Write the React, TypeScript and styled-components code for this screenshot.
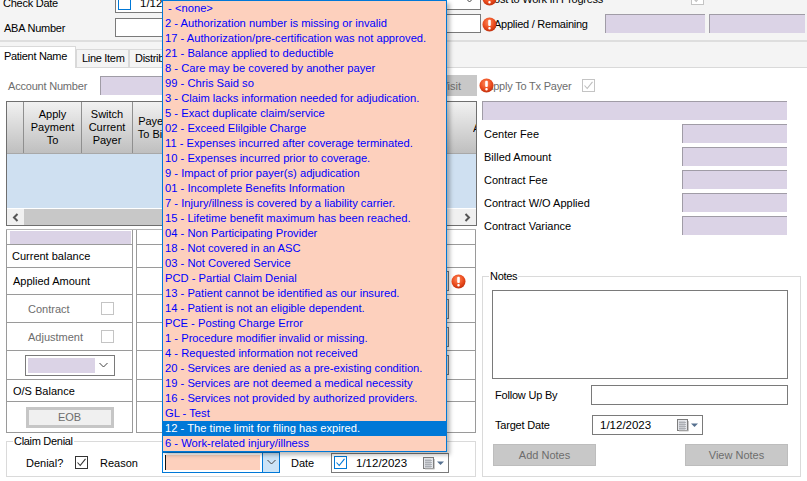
import React from "react";
import styled, { createGlobalStyle } from "styled-components";

const Global = createGlobalStyle`
  html, body { margin: 0; padding: 0; background: #f4f4f4; }
  * { box-sizing: border-box; }
`;

const LILAC = "#dbd3e6";
const PEACH = "#fdd0bd";
const LINE = "#7a7a7a";

const Page = styled.div`
  position: relative;
  width: 807px;
  height: 481px;
  overflow: hidden;
  background: #f4f4f4;
  font-family: "Liberation Sans", Arial, sans-serif;
  font-size: 11px;
  color: #000;
`;

/* ---------- top form ---------- */
const TopBar = styled.div`
  height: 42px;
  border-bottom: 2px solid #dedede;
  display: flex;
  overflow: hidden;
`;
const TopColumn = styled.div<{ $w: number; $lift: number }>`
  width: ${(p) => p.$w}px;
  margin-top: ${(p) => -p.$lift}px;
  flex: none;
  display: flex;
  flex-direction: column;
`;
const TopRow = styled.div<{ $h: number }>`
  height: ${(p) => p.$h}px;
  flex: none;
  display: flex;
  align-items: center;
`;
const TopLabel = styled.span<{ $w: number; $pad?: number }>`
  width: ${(p) => p.$w}px;
  padding-left: ${(p) => p.$pad ?? 0}px;
  flex: none;
  white-space: nowrap;
  letter-spacing: -0.25px;
`;
const TextBox = styled.div<{ $w: number; $h?: number }>`
  width: ${(p) => p.$w}px;
  height: ${(p) => p.$h ?? 20}px;
  border: 1px solid ${LINE};
  background: #fff;
  flex: none;
`;
const LilacBox = styled.div<{ $w: number; $h?: number; $gap?: number }>`
  width: ${(p) => p.$w}px;
  height: ${(p) => p.$h ?? 19}px;
  margin-left: ${(p) => p.$gap ?? 0}px;
  background: ${LILAC};
  border-top: 1px solid #a09ca6;
  border-left: 1px solid #a09ca6;
  flex: none;
`;
const DateField = styled.div<{ $w: number; $h?: number; $pad?: number; $indent?: number }>`
  width: ${(p) => p.$w}px;
  height: ${(p) => p.$h ?? 20}px;
  margin-left: ${(p) => p.$indent ?? 0}px;
  border: 1px solid ${LINE};
  background: #fff;
  flex: none;
  display: flex;
  align-items: center;
  padding: 0 1px 0 ${(p) => p.$pad ?? 2}px;
  gap: 9px;
  font-size: 11.5px;
`;
const DateText = styled.span`
  width: 56px;
  flex: none;
  white-space: nowrap;
`;
const BlueCheck = styled.span`
  width: 13px;
  height: 13px;
  border: 1px solid #0078d7;
  background: #fff;
  flex: none;
  display: flex;
`;
const GreyCheck = styled.span<{ $disabled?: boolean }>`
  width: 13px;
  height: 13px;
  border: 1px solid ${(p) => (p.$disabled ? "#c4c4c4" : "#333")};
  background: #fff;
  flex: none;
  display: flex;
`;
const SmallCombo = styled.div<{ $w: number; $h?: number }>`
  width: ${(p) => p.$w}px;
  height: ${(p) => p.$h ?? 20}px;
  border: 1px solid ${LINE};
  background: #fff;
  flex: none;
  display: flex;
  align-items: center;
  justify-content: space-between;
  padding: 2px 5px 2px 2px;
`;

/* ---------- tabs ---------- */
const TabStrip = styled.div`
  height: 26px;
  display: flex;
  align-items: flex-end;
  border-bottom: 1px solid #d9d9d9;
`;
const Tab = styled.div<{ $active?: boolean; $w: number }>`
  width: ${(p) => p.$w}px;
  height: ${(p) => (p.$active ? 22 : 18)}px;
  background: ${(p) => (p.$active ? "#fff" : "#f4f4f4")};
  border: 1px solid #d9d9d9;
  border-bottom: none;
  border-left: ${(p) => (p.$active ? "none" : "1px solid #d9d9d9")};
  margin-bottom: ${(p) => (p.$active ? -1 : 0)}px;
  padding-left: ${(p) => (p.$active ? 4 : 5)}px;
  line-height: ${(p) => (p.$active ? 19 : 17)}px;
  letter-spacing: -0.3px;
  white-space: nowrap;
  overflow: hidden;
  position: relative;
`;
const TabPanel = styled.div`
  height: 413px;
  background: #fff;
  padding: 7px 0 0 6px;
`;

const AccountRow = styled.div`
  height: 21px;
  display: flex;
  align-items: center;
`;
const MutedLabel = styled.span<{ $w?: number; $pad?: number }>`
  color: #6d6d6d;
  width: ${(p) => (p.$w ? `${p.$w}px` : "auto")};
  padding-left: ${(p) => p.$pad ?? 0}px;
  flex: none;
  white-space: nowrap;
  letter-spacing: -0.2px;
`;
const VisitButton = styled.div`
  width: 106px;
  height: 21px;
  margin-left: 4px;
  background: #c8c8c8;
  color: #6d6d6d;
  display: flex;
  align-items: center;
  justify-content: flex-end;
  padding-right: 16px;
  flex: none;
`;

const Columns = styled.div`
  display: flex;
  margin-top: 5px;
`;
const LeftColumn = styled.div`
  width: 471px;
  flex: none;
`;
const RightColumn = styled.div`
  width: 305px;
  margin-left: 5px;
  flex: none;
`;

/* ---------- data grid ---------- */
const DataGrid = styled.div`
  height: 125px;
  width: 471px;
  border: 1px solid #6f6f6f;
  display: flex;
  flex-direction: column;
`;
const GridHead = styled.div`
  height: 52px;
  display: flex;
  flex: none;
  border-bottom: 1px solid #a8a8a8;
  background: linear-gradient(#f1f1f1, #bfbfbf);
`;
const HeadCell = styled.div<{ $w: number }>`
  width: ${(p) => p.$w}px;
  flex: none;
  border-right: 1px solid #8f8f8f;
  text-align: center;
  display: flex;
  align-items: center;
  justify-content: center;
  line-height: 13px;
  white-space: pre-line;
  overflow: hidden;
`;
const HeadTail = styled.div`
  flex: 1;
  display: flex;
  align-items: center;
  justify-content: flex-end;
`;
const HeadClip = styled.span`
  width: 3px;
  overflow: hidden;
  white-space: nowrap;
`;
const GridBody = styled.div`
  flex: 1;
  background: #cfe0f1;
`;
const ScrollBar = styled.div`
  height: 17px;
  flex: none;
  display: flex;
  align-items: center;
  justify-content: space-between;
  background: #f0f0f0;
  border-top: 1px solid #fff;
`;
const ScrollArrow = styled.span`
  width: 17px;
  height: 16px;
  flex: none;
  display: flex;
  align-items: center;
  justify-content: center;
  background: #f0f0f0;
`;
const ScrollThumb = styled.span`
  flex: 1;
  height: 16px;
  background: #c8c8c8;
  margin-right: 25px;
`;

/* ---------- ledger under the grid ---------- */
const Ledger = styled.div`
  margin-top: 3px;
  width: 470px;
  display: grid;
  grid-template-columns: 127px 340px;
  column-gap: 3px;
  grid-template-rows: 15px 23px 27px 28px 28px 29px 22px 31px;
  border-top: 1px solid #b5b5b5;
`;
const LeftCell = styled.div<{ $pad?: number; $muted?: boolean; $center?: boolean }>`
  border: 1px solid #9a9a9a;
  border-top: none;
  display: flex;
  align-items: center;
  justify-content: ${(p) => (p.$center ? "center" : "flex-start")};
  padding-left: ${(p) => p.$pad ?? 0}px;
  color: ${(p) => (p.$muted ? "#6d6d6d" : "#000")};
  white-space: nowrap;
`;
const RightCell = styled.div`
  border: 1px solid #9a9a9a;
  border-top: none;
  display: flex;
  align-items: center;
  justify-content: flex-end;
  padding-right: 26px;
`;
const CellField = styled.div`
  width: 100px;
  height: 20px;
  border: 1px solid ${LINE};
  background: #efefef;
`;
const LedgerLilac = styled.div`
  width: 121px;
  height: 13px;
  margin: 1px 0 0 3px;
  background: ${LILAC};
`;
const PushRight = styled.span<{ $w: number }>`
  width: ${(p) => p.$w}px;
  flex: none;
`;
const LilacFill = styled.span`
  width: 67px;
  height: 15px;
  background: ${LILAC};
`;
const EobButton = styled.div`
  width: 88px;
  height: 21px;
  border: 3px solid #c6c6c6;
  background: #f0f0f0;
  color: #6d6d6d;
  display: flex;
  align-items: center;
  justify-content: center;
`;

/* ---------- group boxes ---------- */
const GroupBox = styled.fieldset<{ $w: number; $h: number }>`
  width: ${(p) => p.$w}px;
  height: ${(p) => p.$h}px;
  margin: 0;
  padding: 0;
  border: 1px solid #dadada;
  min-inline-size: 0;
`;
const GroupTitle = styled.legend`
  margin-left: 6px;
  padding: 0 1px;
  line-height: 13px;
  font-size: 11px;
  letter-spacing: -0.3px;
`;
const NotesTitle = styled(GroupTitle)`
  margin-left: -3px;
`;
const ClaimGroup = styled(GroupBox)`
  margin-top: 2px;
`;
const ClaimRow = styled.div`
  display: flex;
  align-items: center;
  height: 21px;
  margin-top: 4px;
`;
const ClaimLabel = styled.span<{ $left: number; $w: number }>`
  margin-left: ${(p) => p.$left}px;
  width: ${(p) => p.$w}px;
  flex: none;
  white-space: nowrap;
`;
const FocusCombo = styled.div`
  width: 118px;
  height: 21px;
  border: 1px solid #0078d7;
  background: #fff;
  display: flex;
  flex: none;
`;
const PeachEdit = styled.span`
  width: 95px;
  margin: 2px 0 2px 2px;
  background: ${PEACH};
  border-left: 1px solid #111;
`;
const FocusDrop = styled.span`
  width: 17px;
  margin-left: auto;
  background: #cce4f7;
  border-left: 1px solid #0078d7;
  display: flex;
  align-items: center;
  justify-content: center;
`;

/* ---------- right column ---------- */
const TotalBar = styled.div`
  height: 19px;
  background: ${LILAC};
  border-top: 1px solid #a09ca6;
  border-left: 1px solid #a09ca6;
`;
const FeeRows = styled.div`
  display: flex;
  flex-direction: column;
  gap: 4px;
  margin-top: 4px;
`;
const FeeRow = styled.div`
  height: 19px;
  display: flex;
  align-items: center;
  justify-content: space-between;
  padding-left: 2px;
`;
const NotesGroup = styled(GroupBox)`
  margin-top: 35px;
  padding: 7px 12px 0 9px;
`;
const NotesArea = styled.div`
  height: 89px;
  width: 296px;
  border: 1px solid ${LINE};
  background: #fff;
`;
const NotesRow = styled.div<{ $top: number }>`
  display: flex;
  align-items: center;
  margin-top: ${(p) => p.$top}px;
`;
const NotesLabel = styled.span`
  width: 99px;
  padding-left: 3px;
  flex: none;
  letter-spacing: -0.2px;
`;
const ActionRow = styled.div`
  display: flex;
  justify-content: space-between;
  width: 295px;
  margin: 9px 0 0 1px;
`;
const GreyButton = styled.div`
  width: 103px;
  height: 22px;
  background: #c8c8c8;
  border: 1px solid #bdbdbd;
  color: #6d6d6d;
  display: flex;
  align-items: center;
  justify-content: center;
`;

/* ---------- overlays ---------- */
const ErrorDot = styled.svg<{ $x: number; $y: number }>`
  position: absolute;
  left: ${(p) => p.$x}px;
  top: ${(p) => p.$y}px;
  width: 15px;
  height: 15px;
`;
const DropList = styled.ul`
  position: absolute;
  left: 162px;
  top: 0;
  width: 285px;
  height: 452px;
  margin: 0;
  padding: 0;
  list-style: none;
  background: ${PEACH};
  border: 1px solid #0078d7;
  box-shadow: 3px 3px 4px rgba(0, 0, 0, 0.28);
  font-size: 11.2px;
`;
const DropItem = styled.li<{ $selected?: boolean }>`
  height: 15px;
  line-height: 15px;
  padding-left: 2px;
  white-space: pre;
  color: ${(p) => (p.$selected ? "#fff" : "#0000ff")};
  background: ${(p) => (p.$selected ? "#0078d7" : "transparent")};
`;
const CalendarSvg = styled.svg`
  margin-left: auto;
  flex: none;
`;

const Chevron = () => (
  <svg width="11" height="7" viewBox="0 0 11 7">
    <path d="M1.5 1 5.5 5 9.5 1" fill="none" stroke="#444" strokeWidth="1" />
  </svg>
);
const Tick = ({ color }: { color: string }) => (
  <svg width="11" height="11" viewBox="0 0 11 11">
    <path d="M1.5 5.5 4.2 8.5 9.5 1.8" fill="none" stroke={color} strokeWidth="1.1" />
  </svg>
);
const Arrow = ({ dir }: { dir: "l" | "r" }) => (
  <svg width="7" height="9" viewBox="0 0 7 9">
    <path d={dir === "l" ? "M5.5 1 2 4.5 5.5 8" : "M1.5 1 5 4.5 1.5 8"} fill="none" stroke="#555" strokeWidth="2" />
  </svg>
);
const CalendarIcon = () => (
  <CalendarSvg width="25" height="14" viewBox="0 0 25 14">
    <rect x="1.5" y="1.5" width="10" height="11" fill="#e4e6ea" stroke="#7d7d7d" />
    <path d="M3 4.5h7M3 6.5h7M3 8.5h7M3 10.5h7M4 3v9M6 3v9M8 3v9" stroke="#a3a7ad" strokeWidth="0.8" />
    <path d="M12.5 3v10H3" fill="none" stroke="#c8c8c8" />
    <path d="M15 5.5h7l-3.5 3.5z" fill="#56708f" />
  </CalendarSvg>
);
const ErrorIcon = ({ x, y }: { x: number; y: number }) => {
  const id = `err${x}${y}`;
  return (
    <ErrorDot $x={x} $y={y} viewBox="0 0 15 15">
      <defs>
        <radialGradient id={id} cx="45%" cy="35%" r="70%">
          <stop offset="0" stopColor="#ff8a5c" />
          <stop offset="0.6" stopColor="#ea4a1c" />
          <stop offset="1" stopColor="#b92c0c" />
        </radialGradient>
      </defs>
      <circle cx="7.5" cy="7.5" r="7" fill={`url(#${id})`} />
      <rect x="6.2" y="2.8" width="2.6" height="6.2" rx="1" fill="#fff" />
      <rect x="6.3" y="10" width="2.4" height="2.4" rx="1" fill="#fff" />
    </ErrorDot>
  );
};

const reasons = [
  " - <none>",
  "2 - Authorization number is missing or invalid",
  "17 - Authorization/pre-certification was not approved.",
  "21 - Balance applied to deductible",
  "8 - Care may be covered by another payer",
  "99 - Chris Said so",
  "3 - Claim lacks information needed for adjudication.",
  "5 - Exact duplicate claim/service",
  "02 - Exceed Elilgible Charge",
  "11 - Expenses incurred after coverage terminated.",
  "10 - Expenses incurred prior to coverage.",
  "9 - Impact of prior payer(s) adjudication",
  "01 - Incomplete Benefits Information",
  "7 - Injury/illness is covered by a liability carrier.",
  "15 - Lifetime benefit maximum has been reached.",
  "04 - Non Participating Provider",
  "18 - Not covered in an ASC",
  "03 - Not Covered Service",
  "PCD - Partial Claim Denial",
  "13 - Patient cannot be identified as our insured.",
  "14 - Patient is not an eligible dependent.",
  "PCE - Posting Charge Error",
  "1 - Procedure modifier invalid or missing.",
  "4 - Requested information not received",
  "20 - Services are denied as a pre-existing condition.",
  "19 - Services are not deemed a medical necessity",
  "16 - Services not provided by authorized providers.",
  "GL - Test",
  "12 - The time limit for filing has expired.",
  "6 - Work-related injury/illness",
];

const fees = ["Center Fee", "Billed Amount", "Contract Fee", "Contract W/O Applied", "Contract Variance"];

export default function App() {
  return (
    <Page>
      <Global />
      <TopBar>
        <TopColumn $w={300} $lift={7}>
          <TopRow $h={20}>
            <TopLabel $w={115} $pad={3}>Check Date</TopLabel>
            <DateField $w={170}>
              <BlueCheck />
              <DateText>1/12/2023</DateText>
            </DateField>
          </TopRow>
          <TopRow $h={29}>
            <TopLabel $w={115} $pad={4}>ABA Number</TopLabel>
            <TextBox $w={170} $h={19} />
          </TopRow>
        </TopColumn>
        <TopColumn $w={181} $lift={10}>
          <TopRow $h={20}>
            <SmallCombo $w={181}>
              <span />
              <Chevron />
            </SmallCombo>
          </TopRow>
          <TopRow $h={27}>
            <TextBox $w={181} $h={19} />
          </TopRow>
        </TopColumn>
        <TopColumn $w={326} $lift={8}>
          <TopRow $h={13}>
            <TopLabel $w={210} $pad={6}>Post to Work In Progress</TopLabel>
            <GreyCheck $disabled>
              <Tick color="#bdbdbd" />
            </GreyCheck>
          </TopRow>
          <TopRow $h={37}>
            <TopLabel $w={124} $pad={13}>Applied / Remaining</TopLabel>
            <LilacBox $w={100} />
            <LilacBox $w={96} $gap={4} />
          </TopRow>
        </TopColumn>
      </TopBar>

      <TabStrip>
        <Tab $active $w={76}>Patient Name</Tab>
        <Tab $w={53}>Line Item</Tab>
        <Tab $w={70}>Distribution</Tab>
      </TabStrip>

      <TabPanel>
        <AccountRow>
          <MutedLabel $w={94} $pad={2}>Account Number</MutedLabel>
          <LilacBox $w={267} />
          <VisitButton>Visit</VisitButton>
          <MutedLabel $w={105} $pad={9}>Apply To Tx Payer</MutedLabel>
          <GreyCheck $disabled>
            <Tick color="#bdbdbd" />
          </GreyCheck>
        </AccountRow>

        <Columns>
          <LeftColumn>
            <DataGrid>
              <GridHead>
                <HeadCell $w={17} />
                <HeadCell $w={58}>{"Apply\nPayment\nTo"}</HeadCell>
                <HeadCell $w={51}>{"Switch\nCurrent\nPayer"}</HeadCell>
                <HeadCell $w={40}>{"Payer\nTo Bill"}</HeadCell>
                <HeadTail><HeadClip>Applied</HeadClip></HeadTail>
              </GridHead>
              <GridBody />
              <ScrollBar>
                <ScrollArrow><Arrow dir="l" /></ScrollArrow>
                <ScrollThumb />
                <ScrollArrow><Arrow dir="r" /></ScrollArrow>
              </ScrollBar>
            </DataGrid>

            <Ledger>
              <LeftCell><LedgerLilac /></LeftCell>
              <RightCell />
              <LeftCell $pad={5}>Current balance</LeftCell>
              <RightCell />
              <LeftCell $pad={6}>Applied Amount</LeftCell>
              <RightCell><CellField /></RightCell>
              <LeftCell $pad={21} $muted>
                <PushRight $w={73}>Contract</PushRight>
                <GreyCheck $disabled />
              </LeftCell>
              <RightCell><CellField /></RightCell>
              <LeftCell $pad={21} $muted>
                <PushRight $w={73}>Adjustment</PushRight>
                <GreyCheck $disabled />
              </LeftCell>
              <RightCell><CellField /></RightCell>
              <LeftCell $pad={18}>
                <SmallCombo $w={90} $h={21}>
                  <LilacFill />
                  <Chevron />
                </SmallCombo>
              </LeftCell>
              <RightCell><CellField /></RightCell>
              <LeftCell $pad={6}>O/S Balance</LeftCell>
              <RightCell />
              <LeftCell $center><EobButton>EOB</EobButton></LeftCell>
              <RightCell />
            </Ledger>

            <ClaimGroup $w={470} $h={42}>
              <GroupTitle>Claim Denial</GroupTitle>
              <ClaimRow>
                <ClaimLabel $left={19} $w={49}>Denial?</ClaimLabel>
                <GreyCheck><Tick color="#333" /></GreyCheck>
                <ClaimLabel $left={12} $w={62}>Reason</ClaimLabel>
                <FocusCombo>
                  <PeachEdit />
                  <FocusDrop><Chevron /></FocusDrop>
                </FocusCombo>
                <ClaimLabel $left={11} $w={40}>Date</ClaimLabel>
                <DateField $w={118}>
                  <BlueCheck><Tick color="#0078d7" /></BlueCheck>
                  <DateText>1/12/2023</DateText>
                  <CalendarIcon />
                </DateField>
              </ClaimRow>
            </ClaimGroup>
          </LeftColumn>

          <RightColumn>
            <TotalBar />
            <FeeRows>
              {fees.map((f) => (
                <FeeRow key={f}>
                  <span>{f}</span>
                  <LilacBox $w={105} />
                </FeeRow>
              ))}
            </FeeRows>
            <NotesGroup $w={319} $h={207}>
              <NotesTitle>Notes</NotesTitle>
              <NotesArea />
              <NotesRow $top={6}>
                <NotesLabel>Follow Up By</NotesLabel>
                <TextBox $w={197} />
              </NotesRow>
              <NotesRow $top={10}>
                <NotesLabel>Target Date</NotesLabel>
                <DateField $w={111} $pad={7} $indent={1}>
                  <DateText>1/12/2023</DateText>
                  <CalendarIcon />
                </DateField>
              </NotesRow>
              <ActionRow>
                <GreyButton>Add Notes</GreyButton>
                <GreyButton>View Notes</GreyButton>
              </ActionRow>
            </NotesGroup>
          </RightColumn>
        </Columns>
      </TabPanel>

      <DropList>
        {reasons.map((r, i) => (
          <DropItem key={r} $selected={i === 28}>{r}</DropItem>
        ))}
      </DropList>

      <ErrorIcon x={482} y={-9} />
      <ErrorIcon x={482} y={17} />
      <ErrorIcon x={479} y={78} />
      <ErrorIcon x={451} y={274} />
    </Page>
  );
}
